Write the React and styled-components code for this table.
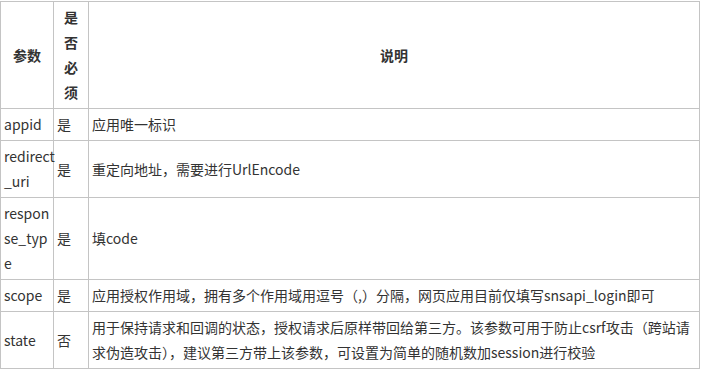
import React from "react";
import styled, { createGlobalStyle } from "styled-components";

// Parameter table for the OAuth authorize request: name, required flag, description.
// Names carry "|" where the narrow first column is allowed to wrap them.

const rows = [
  { name: "appid", required: "是", desc: "应用唯一标识" },
  { name: "redirect|_uri", required: "是", desc: "重定向地址，需要进行UrlEncode" },
  { name: "respon|se_typ|e", required: "是", desc: "填code" },
  {
    name: "scope",
    required: "是",
    desc: "应用授权作用域，拥有多个作用域用逗号（,）分隔，网页应用目前仅填写snsapi_login即可",
  },
  {
    name: "state",
    required: "否",
    desc: "用于保持请求和回调的状态，授权请求后原样带回给第三方。该参数可用于防止csrf攻击（跨站请求伪造攻击），建议第三方带上该参数，可设置为简单的随机数加session进行校验",
  },
];

function ParamName({ name }) {
  const parts = name.split("|");
  return parts.map((part, i) => (
    <React.Fragment key={i}>
      {part}
      {i < parts.length - 1 && <wbr />}
    </React.Fragment>
  ));
}

function App() {
  return (
    <>
      <GlobalStyle />
      <Table>
        <colgroup>
          <col style={{ width: 53 }} />
          <col style={{ width: 35 }} />
          <col />
        </colgroup>
        <thead>
          <tr>
            <Head>参数</Head>
            <Head narrow>是否必须</Head>
            <Head>说明</Head>
          </tr>
        </thead>
        <tbody>
          {rows.map((row) => (
            <tr key={row.name}>
              <NameCell>
                <ParamName name={row.name} />
              </NameCell>
              <Cell>{row.required}</Cell>
              <Cell>{row.desc}</Cell>
            </tr>
          ))}
        </tbody>
      </Table>
    </>
  );
}

const GlobalStyle = createGlobalStyle`
    body {
        margin: 0;
        background: #fff;
        font-family: "Noto Sans CJK SC", "Noto Sans", sans-serif;
        color: #333;
    }
`;

const Table = styled.table`
    margin-top: 1px;
    width: 700px;
    border-collapse: collapse;
    table-layout: fixed;
    font-size: 14px;
    line-height: 25px;
`;

const Head = styled.th`
    border: 1px solid #c4c4c4;
    padding: 3px ${(p) => (p.narrow ? "10px" : "3px")};
    font-weight: bold;
    text-align: center;
    vertical-align: middle;
    word-break: break-all;
`;

const Cell = styled.td`
    border: 1px solid #c4c4c4;
    padding: 3px 3px;
    text-align: left;
    vertical-align: middle;
    word-break: break-all;
`;

const NameCell = styled(Cell)`
    padding-right: 0;
    word-break: normal;
    overflow-wrap: anywhere;
    white-space: nowrap;
`;

export default App;
